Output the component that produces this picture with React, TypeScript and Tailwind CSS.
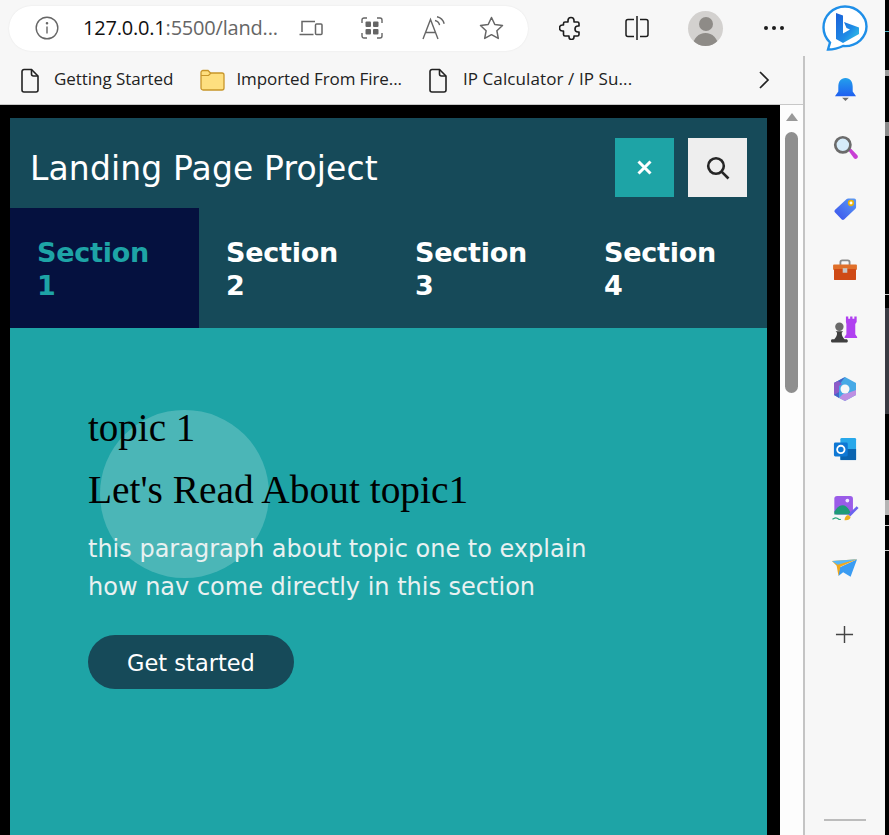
import React from 'react';

const uiFont = "font-['Open_Sans','Noto_Sans',sans-serif]";
const pageFont = "font-['DejaVu_Sans','Verdana',sans-serif]";
const serifFont = "font-['Liberation_Serif','Times_New_Roman',serif]";

const PageIcon = () => (
  <svg width="20" height="25" viewBox="0 0 20 25" fill="none" stroke="#222" strokeWidth="1.6">
    <path d="M2 3.500a2 2 0 0 1 2-2h7.500l6.500 6.500v14a2 2 0 0 1-2 2H4a2 2 0 0 1-2-2z" />
    <path d="M11.500 1.500v4.500a2 2 0 0 0 2 2H18" />
  </svg>
);

const FolderIcon = () => (
  <svg width="25" height="22" viewBox="0 0 25 22">
    <path
      d="M1 3.500a2 2 0 0 1 2-2h5l2.500 2.500H22a2 2 0 0 1 2 2V19a2 2 0 0 1-2 2H3a2 2 0 0 1-2-2z"
      fill="#fedf7f"
      stroke="#c8962a"
      strokeWidth="1.3"
    />
    <path d="M1 6.500h7.500L11 4" fill="none" stroke="#c8962a" strokeWidth="1.2" />
  </svg>
);

const AddressBar = () => (
  <div className="ml-[9px] flex h-[45px] w-[519px] items-center rounded-[23px] bg-white shadow-[0_0_2px_rgba(0,0,0,0.08)]">
    <svg className="ml-[26px]" width="24" height="24" viewBox="0 0 24 24" fill="none" stroke="#666" strokeWidth="1.4">
      <circle cx="12" cy="12" r="10.800" />
      <path d="M12 10.500v7" />
      <circle cx="12" cy="7.300" r="0.600" fill="#666" />
    </svg>
    <span className="ml-[24px] w-[200px] text-[20px] leading-none tracking-[-0.2px] text-[#666]">
      <span className="text-[#111]">127.0.0.1</span>:5500/land...
    </span>
    <svg className="ml-[16px]" width="24" height="18" viewBox="0 0 24 18" fill="none" stroke="#666" strokeWidth="1.5">
      <path d="M3 13V2.500h13M0.500 15.500h14" />
      <rect x="16.500" y="5" width="6.500" height="10.500" rx="1" />
    </svg>
    <svg className="ml-[38px]" width="22" height="22" viewBox="0 0 22 22" fill="none">
      <path d="M1 6V3a2 2 0 0 1 2-2h3M16 1h3a2 2 0 0 1 2 2v3M21 16v3a2 2 0 0 1-2 2h-3M6 21H3a2 2 0 0 1-2-2v-3" stroke="#666" strokeWidth="1.4" />
      <rect x="4.500" y="4.500" width="5.500" height="5.500" rx="1" fill="#666" />
      <rect x="12" y="4.500" width="5.500" height="5.500" rx="1" fill="#666" />
      <rect x="4.500" y="12" width="5.500" height="5.500" rx="1" fill="#666" />
      <rect x="12" y="12" width="5.500" height="5.500" rx="1" fill="#666" />
    </svg>
    <svg className="ml-[39px]" width="24" height="24" viewBox="0 0 24 24" fill="none" stroke="#666" strokeWidth="1.4">
      <path d="M1 23 8.500 3.500 16 23M3.500 16.500h10" />
      <path d="M13 4.500c2.400.5 4 2 4.600 4.600M15 .8c3.500.8 6.200 3.400 7.200 7" />
    </svg>
    <svg className="ml-[33px]" width="25" height="24" viewBox="0 0 25 24" fill="none" stroke="#666" strokeWidth="1.5">
      <path d="m12.500 1.500 3.300 7 7.700 1-5.600 5.300 1.400 7.600-6.800-3.700-6.800 3.700 1.400-7.600L1.500 9.500l7.700-1z" strokeLinejoin="round" />
    </svg>
  </div>
);

const TopRightTools = () => (
  <div className="flex items-center">
    <svg className="ml-[31px]" width="24" height="24" viewBox="0 0 24 24" fill="none" stroke="#1c1c1c" strokeWidth="1.6">
      <path
        d="M9 4.500a3 3 0 0 1 6 0V6h3.500a1.500 1.500 0 0 1 1.500 1.500V10h-1a3 3 0 0 0 0 6h1v2.500a1.500 1.500 0 0 1-1.500 1.500H15v1a2.500 2.500 0 0 1-5 0v-1H6a1.500 1.500 0 0 1-1.500-1.500V15h-1a3 3 0 0 1 0-6h1V7.500A1.500 1.500 0 0 1 6 6h3z"
        strokeLinejoin="round"
      />
    </svg>
    <svg className="ml-[42px]" width="24" height="26" viewBox="0 0 24 26" fill="none" stroke="#1c1c1c" strokeWidth="1.5">
      <path d="M9 4.500H3a2 2 0 0 0-2 2v13a2 2 0 0 0 2 2h6M15 4.500h6a2 2 0 0 1 2 2v13a2 2 0 0 1-2 2h-6M12 1v24" />
    </svg>
    <div className="ml-[39px] h-[35px] w-[35px] overflow-hidden rounded-full bg-[#d3d1cf]">
      <div className="mx-auto mt-[6px] h-[14px] w-[14px] rounded-full bg-[#8e8b87]" />
      <div className="mx-auto mt-[2px] h-[20px] w-[25px] rounded-t-full bg-[#8e8b87]" />
    </div>
    <div className="ml-[41px] flex w-[20px] justify-between">
      <span className="h-[4px] w-[4px] rounded-full bg-[#1c1c1c]" />
      <span className="h-[4px] w-[4px] rounded-full bg-[#1c1c1c]" />
      <span className="h-[4px] w-[4px] rounded-full bg-[#1c1c1c]" />
    </div>
    <svg className="ml-[38px]" width="46" height="46" viewBox="0 0 46 46">
      <defs>
        <linearGradient id="bingB" x1="0" y1="0" x2="1" y2="1">
          <stop offset="0" stopColor="#1b5fd8" />
          <stop offset="0.6" stopColor="#1f8ce6" />
          <stop offset="1" stopColor="#38d0e6" />
        </linearGradient>
      </defs>
      <path
        d="M23 1.500C11 1.500 1.500 11 1.500 22.500c0 6 2.500 11 6.500 15l-2 7c6 0 11-1.500 15-3.500.7 0 1.300.1 2 .1 12 0 21.500-9 21.500-19.500S35 1.500 23 1.500z"
        fill="#fff"
        stroke="#1f8fe8"
        strokeWidth="2.400"
      />
      <path d="M14 8l7 2.500v18l7-4-3.500-1.500-2.500-6 15 5.500v6.500L21 38l-7-4z" fill="url(#bingB)" />
    </svg>
  </div>
);

const Bookmark = ({ icon, label, className }: { icon: React.ReactNode; label: string; className: string }) => (
  <div className={`flex items-center ${className}`}>
    {icon}
    <span className="pb-[3px] text-[17px] leading-none text-[#222]">{label}</span>
  </div>
);

const Sidebar = () => (
  <div className="flex w-[82px] shrink-0 flex-col items-center border-l-2 border-[#c4c4c4] bg-[#f7f7f7]">
    {/* bell */}
    <svg className="mt-[21px]" width="23" height="25" viewBox="0 0 24 26">
      <defs>
        <linearGradient id="bell" x1="0" y1="0" x2="0" y2="1">
          <stop offset="0" stopColor="#23a0ec" />
          <stop offset="1" stopColor="#1f5ff0" />
        </linearGradient>
      </defs>
      <path d="M12 1c5 0 7.500 4 7.500 9v5l3.500 5H1l3.500-5v-5C4.500 5 7 1 12 1z" fill="url(#bell)" />
      <path d="M8.500 21.500h7L12 25z" fill="#6d6d6d" />
    </svg>
    {/* search */}
    <svg className="mt-[33px]" width="25" height="25" viewBox="0 0 28 28">
      <path d="m17 17 3-2 7 7.500a2 2 0 0 1-3.500 3.500z" fill="#c83fd4" />
      <circle cx="11" cy="11" r="8.500" fill="#d6ecfa" stroke="#6b6b6b" strokeWidth="3" />
    </svg>
    {/* tag */}
    <svg className="mt-[37px]" width="24" height="24" viewBox="0 0 26 26">
      <defs>
        <linearGradient id="tag" x1="0" y1="1" x2="1" y2="0">
          <stop offset="0" stopColor="#3a50ec" />
          <stop offset="1" stopColor="#5b9cf5" />
        </linearGradient>
      </defs>
      <path d="M2 16.500a2 2 0 0 1 0-2.500L14.500 2.500a3 3 0 0 1 2-1H23a2 2 0 0 1 2 2V11a3 3 0 0 1-1 2L12 24.500a2 2 0 0 1-2.500 0z" fill="url(#tag)" />
      <circle cx="19.500" cy="6.500" r="2.500" fill="#fff" stroke="#eab308" strokeWidth="1.800" />
    </svg>
    {/* toolbox */}
    <svg className="mt-[38px]" width="28" height="22" viewBox="0 0 28 24">
      <path d="M9 7V3.500a2 2 0 0 1 2-2h6a2 2 0 0 1 2 2V7" fill="none" stroke="#8a8a8a" strokeWidth="2" />
      <rect x="1" y="6" width="26" height="6" rx="1" fill="#e0702a" />
      <rect x="2" y="11" width="24" height="12" rx="1" fill="#cf4a16" />
      <rect x="11.500" y="10" width="5" height="5" fill="#c6c6c6" />
    </svg>
    {/* chess pieces */}
    <svg className="mt-[34px]" width="28" height="29" viewBox="0 0 30 30">
      <path d="M16 1h2.500v2.500h2V1H23v2.500h2V1h2.500v6L26 9v11l2 3v1H14.500v-1l2-3V9L16 7z" fill="#b040f0" />
      <circle cx="9" cy="12" r="4.500" fill="#6a6a6a" />
      <path d="M5 17h8l-1.500 1.500c0 3 1 5 3 7H3.500c2-2 3-4 3-7zM1 25.500h16a2 2 0 0 1 0 3.500H1a2 2 0 0 1 0-3.500z" fill="#3f3f3f" />
    </svg>
    {/* microsoft 365 */}
    <svg className="mt-[32px]" width="24" height="26" viewBox="0 0 24 26">
      <path d="M12 1 23 7v12l-11 6L1 19V7z" fill="#46a9e6" strokeLinejoin="round" />
      <path d="M12 1 1 7v12l5 3V9z" fill="#4464c8" />
      <path d="M6 22l6 3 11-6v-5l-8 3-5 1z" fill="#bd8fe2" />
      <path d="M1 7l4-2 4 3-3 2v6l-5 3z" fill="#8c5cc8" />
      <circle cx="12" cy="13" r="4.500" fill="#f7f7f7" />
    </svg>
    {/* outlook */}
    <svg className="mt-[35px]" width="24" height="24" viewBox="0 0 26 26">
      <rect x="8" y="1" width="17" height="24" rx="1.500" fill="#28a8ea" />
      <path d="M8 13h17v12H8z" fill="#0a64b0" />
      <rect x="1" y="6" width="15" height="15" rx="1.500" fill="#0f78d4" />
      <circle cx="8.500" cy="13.500" r="4" fill="none" stroke="#fff" strokeWidth="2" />
    </svg>
    {/* designer */}
    <svg className="mt-[34px]" width="29" height="27" viewBox="0 0 30 29">
      <rect x="3" y="1" width="20" height="20" rx="3" fill="#9a5ce8" />
      <circle cx="17" cy="6" r="2" fill="#f1e6ff" />
      <path d="M3 18c3-5 6-7 9-7 3 0 6 3 8 7v3H3z" fill="#1f9b78" />
      <path d="m18 21 9-9 2 2-9 9z" fill="#6a62ee" />
      <path d="M14 27c0-3 1.500-5 4-5.500l2.500 2c-.5 2.500-3 4-6.500 3.500z" fill="#eeb020" />
      <path d="M1 26c2-1 3-2 5-1s2 2 4 1" fill="none" stroke="#25a57a" strokeWidth="1.300" />
    </svg>
    {/* send */}
    <svg className="mt-[37px]" width="26" height="19" viewBox="0 0 28 20">
      <path d="M8 9 27 0 20 19l-8-5-5 4z" fill="#3b9cf2" />
      <path d="M0 2 27 0 9 8l-2 10-2-11z" fill="#f0a81c" />
      <path d="M0 2 27 0 6 6z" fill="#57b8f8" />
    </svg>
    <svg className="mt-[47px] -ml-[2px]" width="19" height="19" viewBox="0 0 20 20" stroke="#444" strokeWidth="1.500">
      <path d="M10 1v18M1 10h18" />
    </svg>
    <div className="mt-auto mb-[14px] h-[2px] w-[42px] bg-[#bcbcbc]" />
  </div>
);

const Scrollbar = () => (
  <div className="flex w-[23px] shrink-0 flex-col items-center bg-[#fdfdfd]">
    <div className="mt-[8px] h-0 w-0 border-x-[6.500px] border-b-[8px] border-x-transparent border-b-[#9a9a9a]" />
    <div className="mt-[11px] h-[261px] w-[13px] rounded-full bg-[#8f8f8f]" />
  </div>
);

// sliver of the window behind the browser
const BehindWindow = () => (
  <div className="flex w-[4px] shrink-0 flex-col bg-black">
    <div className="mt-[31px] h-[1px] bg-[#4fb3c8]" />
    <div className="mt-[38px] h-[6px] bg-[#9a9a9a]" />
    <div className="mt-[46px] h-[14px] bg-[#8a8a8a]" />
    <div className="mt-[158px] h-[1px] bg-[#cfcfcf]" />
    <div className="mt-[13px] h-[106px] bg-[#3a3a42]" />
    <div className="mt-[86px] h-[15px] bg-[#b5b5b5]" />
    <div className="mt-[10px] h-[1px] bg-[#cfcfcf]" />
    <div className="mt-[24px] h-[1px] bg-[#cfcfcf]" />
  </div>
);

const sections = ['Section 1', 'Section 2', 'Section 3', 'Section 4'];

const App: React.FC = () => {
  return (
    <div className={`flex h-[835px] w-[889px] overflow-hidden bg-[#f7f7f7] ${uiFont}`}>
      <div className="flex w-[885px] shrink-0 flex-col">
        <div className="flex h-[56px] shrink-0 items-center">
          <AddressBar />
          <TopRightTools />
        </div>
        <div className="flex min-h-0 flex-1">
          <div className="flex w-[803px] shrink-0 flex-col">
            <div className="flex h-[48px] shrink-0 items-center">
              <Bookmark icon={<PageIcon />} label="Getting Started" className="ml-[20px] gap-[14px] tracking-[-0.05px]" />
              <Bookmark icon={<FolderIcon />} label="Imported From Fire..." className="ml-[27px] gap-[11px] tracking-[-0.1px]" />
              <Bookmark icon={<PageIcon />} label="IP Calculator / IP Su..." className="ml-[26px] gap-[15px] tracking-[0.1px]" />
              <svg className="ml-[126px]" width="12" height="18" viewBox="0 0 12 18" fill="none" stroke="#222" strokeWidth="1.700">
                <path d="m2 1 8 8-8 8" />
              </svg>
            </div>
            <div className="flex min-h-0 flex-1 border-t border-[#c8c8c8]">
              <div className="flex w-[780px] shrink-0 flex-col bg-black pl-[10px] pr-[13px] pt-[13px]">
                <header className={`flex h-[90px] shrink-0 items-start justify-between bg-[#164a59] pl-[20px] pr-[20px] pt-[20px] ${pageFont}`}>
                  <h1 className="pt-[1px] text-[33px] font-normal leading-[59px] tracking-[0.13px] text-white">Landing Page Project</h1>
                  <div className="flex gap-[14px]">
                    <button className="flex h-[59px] w-[59px] items-center justify-center bg-[#1ea4a6]">
                      <svg width="15" height="15" viewBox="0 0 15 15" stroke="#fff" strokeWidth="3">
                        <path d="m1.500 1.500 12 12M13.500 1.500l-12 12" />
                      </svg>
                    </button>
                    <button className="flex h-[59px] w-[59px] items-center justify-center bg-[#eeeeee]">
                      <svg width="24" height="24" viewBox="0 0 24 24" fill="none" stroke="#262626" strokeWidth="2.600">
                        <circle cx="10" cy="10" r="7.800" />
                        <path d="m15.800 15.800 6.700 6.700" />
                      </svg>
                    </button>
                  </div>
                </header>
                <nav className={`flex h-[120px] shrink-0 bg-[#164a59] ${pageFont}`}>
                  {sections.map((section, i) => (
                    <a
                      key={section}
                      className={`w-[189px] pl-[27px] pr-[40px] pt-[28px] text-[27px] font-bold leading-[33px] tracking-[-0.25px] ${
                        i === 0 ? 'bg-[#05113f] text-[#1ea4a6]' : 'text-white'
                      }`}
                    >
                      {section}
                    </a>
                  ))}
                </nav>
                <main className="relative flex-1 bg-[#1ea4a6] pl-[78px] pt-[76px]">
                  <div className="absolute left-[90px] top-[82px] h-[168px] w-[169px] rounded-full bg-white/20" />
                  <div className="relative">
                    <h2 className={`text-[39px] font-normal leading-[48px] text-black ${serifFont}`}>topic 1</h2>
                    <h3 className={`mt-[14px] text-[39.4px] font-normal leading-[48px] text-black ${serifFont}`}>Let's Read About topic1</h3>
                    <p className={`mt-[16px] w-[520px] text-[24px] leading-[38px] text-[#e9f1f1] ${pageFont}`}>
                      this paragraph about topic one to explain how nav come directly in this section
                    </p>
                    <button className={`mt-[29px] h-[54px] w-[206px] rounded-[27px] bg-[#164a59] pt-[3px] text-[22.5px] text-white ${pageFont}`}>
                      Get started
                    </button>
                  </div>
                </main>
              </div>
              <Scrollbar />
            </div>
          </div>
          <Sidebar />
        </div>
      </div>
      <BehindWindow />
    </div>
  );
};

export default App;
